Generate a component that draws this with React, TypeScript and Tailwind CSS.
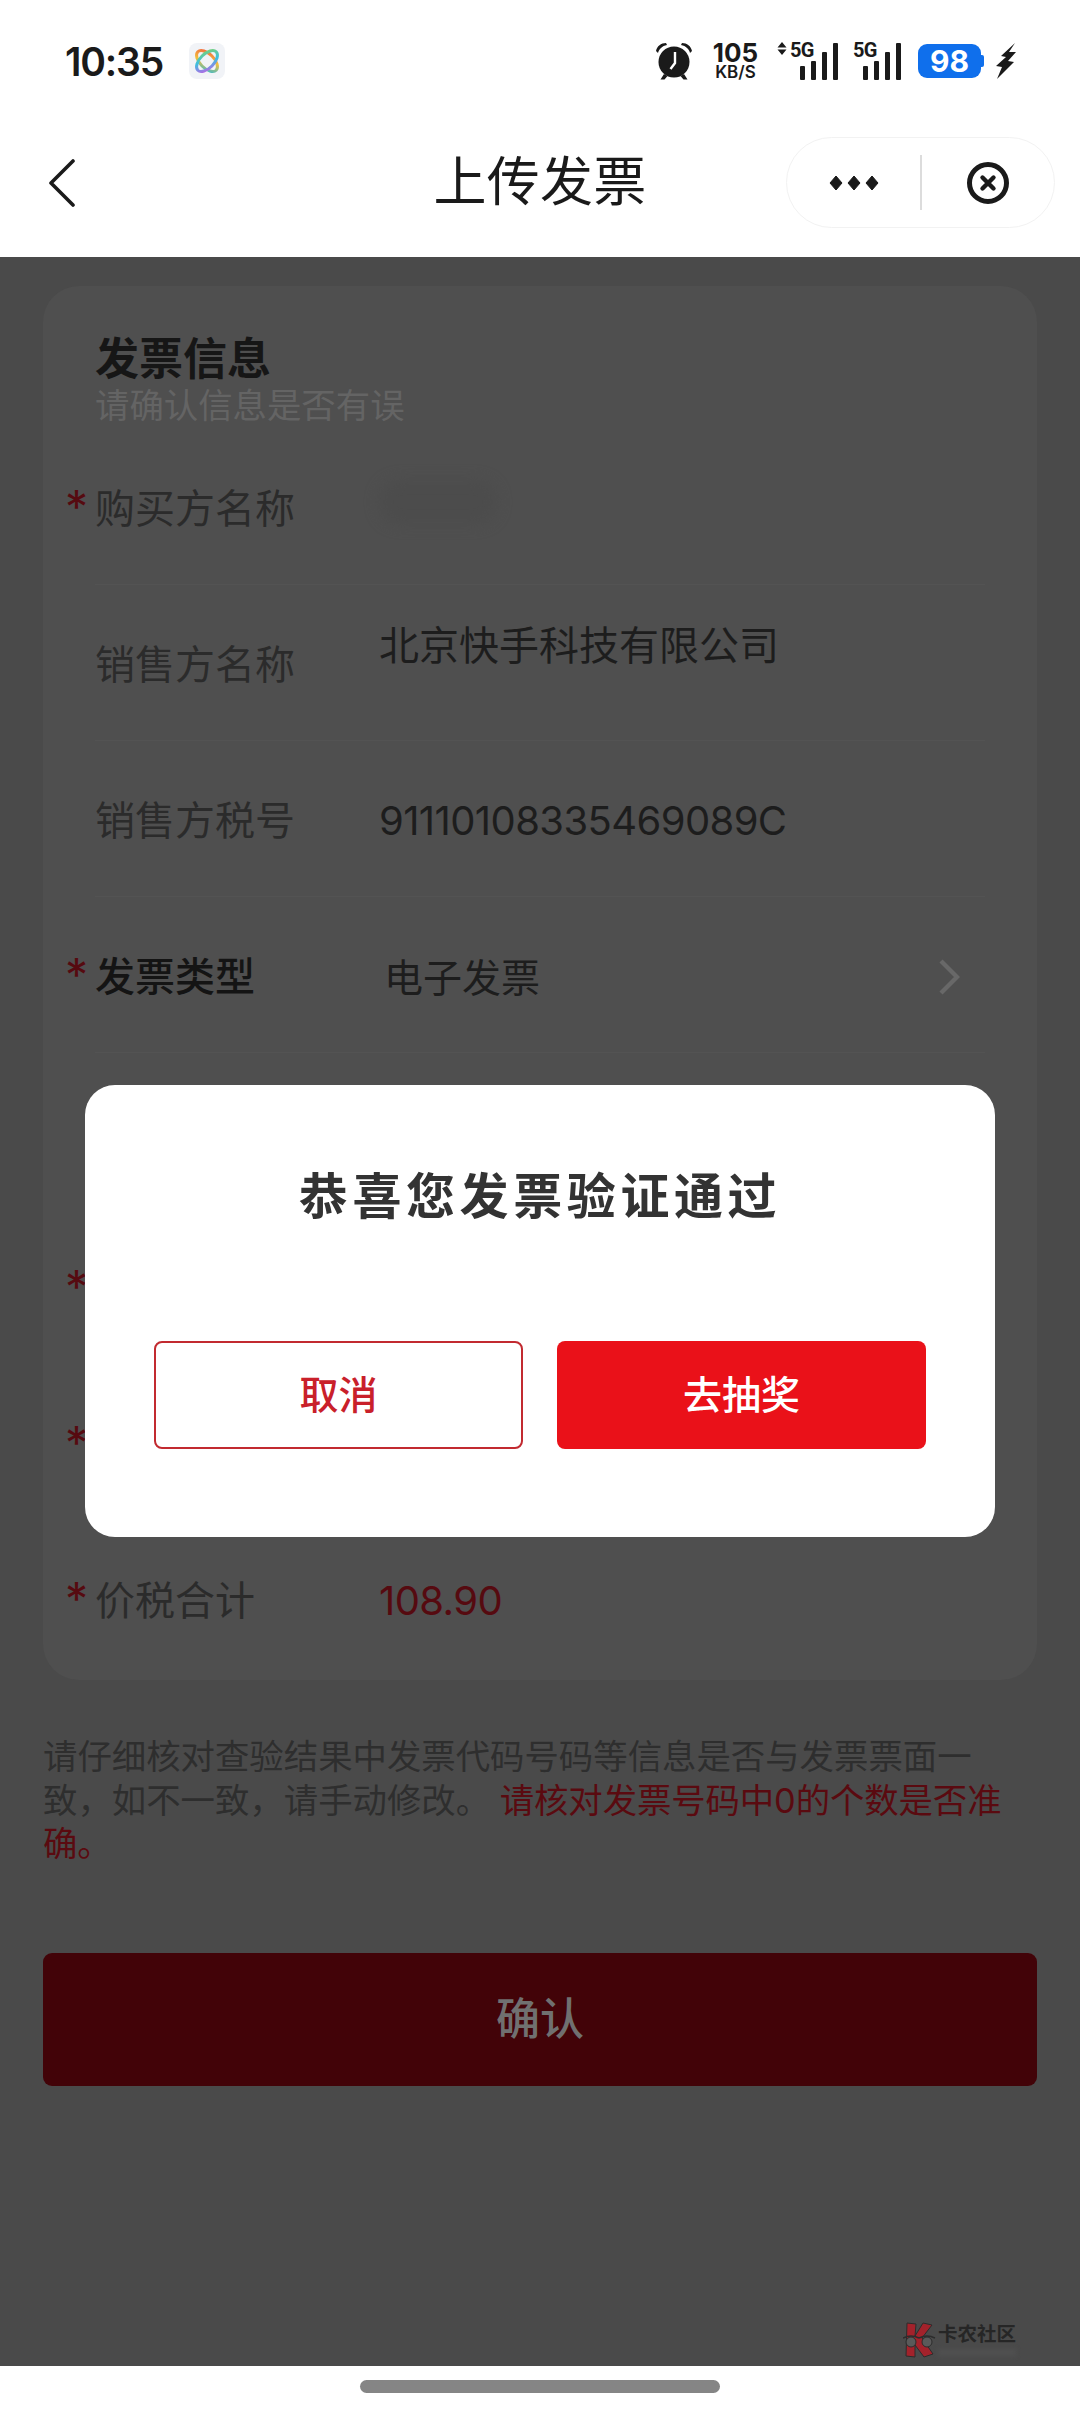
import React from 'react';

const rows = [
  { label: '购买方名称', required: true, value: null },
  { label: '销售方名称', value: '北京快手科技有限公司', raised: true },
  { label: '销售方税号', value: '91110108335469089C', digits: true },
  { label: '发票类型', required: true, value: '电子发票', select: true },
  { label: '发票代码' },
  { label: '发票号码', required: true },
  { label: '开票日期', required: true },
  { label: '价税合计', required: true, value: '108.90', red: true, digits: true, last: true },
];

const SignalBars = ({ arrows }: { arrows?: boolean }) => (
  <div className={arrows ? 'relative w-[62px] h-[38px]' : 'relative w-[49px] h-[38px]'}>
    <svg width={arrows ? 62 : 49} height="38" viewBox={arrows ? '0 0 62 38' : '0 0 49 38'} className="block">
      {arrows && <path d="M5 0 L9.5 5.5 H0.5 Z M5 13 L9.5 7.5 H0.5 Z" fill="#1a1a1a" />}
      <g fill="#1a1a1a" transform={arrows ? 'translate(13 0)' : 'translate(0 0)'}>
        <rect x="10" y="24" width="5" height="14" rx="1" />
        <rect x="21" y="19" width="5" height="19" rx="1" />
        <rect x="32" y="10" width="5" height="28" rx="1" />
        <rect x="43" y="1" width="5" height="37" rx="1" />
      </g>
    </svg>
    <span
      className={
        (arrows ? 'left-[13px] ' : 'left-0 ') +
        "absolute top-0 text-[20px] leading-[16px] font-bold tracking-[-0.8px] font-['Roboto',sans-serif]"
      }
    >
      5G
    </span>
  </div>
);

export default function App() {
  return (
    <div className="relative w-[1080px] h-[2412px] overflow-hidden flex flex-col bg-white font-['Inter','Noto_Sans_CJK_SC',sans-serif] text-[#1a1a1a]">
      {/* status bar */}
      <div className="h-[122px] shrink-0 flex items-center pl-[65px] pr-[64px]">
        <span className="mt-[1px] text-[39px] leading-none font-semibold tracking-[-1.2px]">10:35</span>
        <div className="ml-[26px] w-[36px] h-[36px] rounded-[8px] bg-[#f1f3f7] flex items-center justify-center">
          <svg width="28" height="28" viewBox="0 0 28 28" fill="none" strokeWidth="3">
            <defs>
              <linearGradient id="loopA" x1="0" y1="0" x2="1" y2="1">
                <stop offset="0" stopColor="#f2603f" />
                <stop offset="0.5" stopColor="#f3c03c" />
                <stop offset="1" stopColor="#2fb9d6" />
              </linearGradient>
              <linearGradient id="loopB" x1="1" y1="0" x2="0" y2="1">
                <stop offset="0" stopColor="#7ed36a" />
                <stop offset="0.5" stopColor="#3dbfe0" />
                <stop offset="1" stopColor="#c25de6" />
              </linearGradient>
            </defs>
            <ellipse cx="14" cy="14" rx="13" ry="7" transform="rotate(45 14 14)" stroke="url(#loopA)" />
            <ellipse cx="14" cy="14" rx="13" ry="7" transform="rotate(-45 14 14)" stroke="url(#loopB)" />
          </svg>
        </div>
        <div className="ml-auto flex items-center">
          <svg width="38" height="38" viewBox="0 0 38 38" fill="#1a1a1a">
            <path d="M1 9 C2 4 6 1 11 1 L12 3 C7 4 4 7 3 11 Z M37 9 C36 4 32 1 27 1 L26 3 C31 4 34 7 35 11 Z" />
            <circle cx="19" cy="20" r="15.5" />
            <path d="M9 32 L5.5 37.5 H9.5 L12.5 34 Z M29 32 L32.5 37.5 H28.5 L25.5 34 Z" />
            <path d="M20 10 V21 L15.5 27" stroke="#fff" strokeWidth="2.4" fill="none" />
          </svg>
          <div className="ml-[20px] w-[45px] flex flex-col items-center">
            <span className="text-[26px] leading-[22px] font-bold">105</span>
            <span className="text-[17px] leading-[16px] font-semibold">KB/S</span>
          </div>
          <div className="ml-[19px]"><SignalBars arrows /></div>
          <div className="ml-[14px]"><SignalBars /></div>
          <div className="ml-[16px] flex items-center">
            <div className="w-[63px] h-[34px] rounded-[9px] bg-[#0f6fec] flex items-center justify-center text-white text-[30px] leading-none font-bold">98</div>
            <div className="w-[3px] h-[12px] rounded-r-[2px] bg-[#0f6fec]" />
          </div>
          <svg className="ml-[12px]" width="20" height="36" viewBox="0 0 20 36" fill="#1a1a1a">
            <path d="M19 0 L5 13 L10 14 L0 23 L6 24 L1 36 L18 19 L12 18 L20 9 L13 9 Z" />
          </svg>
        </div>
      </div>

      {/* nav bar */}
      <div className="h-[135px] shrink-0 pb-[14px] grid grid-cols-[1fr_auto_1fr] items-center">
        <div className="pl-[48px]">
          <svg width="28" height="48" viewBox="0 0 28 48" fill="none" stroke="#1a1a1a" strokeWidth="3.6" strokeLinecap="round" strokeLinejoin="round" className="block">
            <path d="M25 2 L3 24 L25 46" />
          </svg>
        </div>
        <div className="text-[53px] leading-none tracking-[0.3px] text-[#1a1a1a]">上传发票</div>
        <div className="flex justify-end pr-[25px]">
          <div className="w-[269px] h-[91px] rounded-full border border-[#f2f2f2] flex items-center">
            <div className="w-[133px] flex justify-center">
              <svg width="50" height="16" viewBox="0 0 50 16" fill="#1a1a1a">
                <path d="M7 1 L13 8 L7 15 L1 8 Z M25 1 L31 8 L25 15 L19 8 Z M43 1 L49 8 L43 15 L37 8 Z" stroke="#1a1a1a" strokeWidth="1" strokeLinejoin="round" />
              </svg>
            </div>
            <div className="w-[2px] h-[55px] bg-[#dcdcdc]" />
            <div className="flex-1 flex justify-center">
              <svg width="44" height="44" viewBox="0 0 44 44" fill="none" stroke="#1a1a1a">
                <circle cx="22" cy="22" r="18.5" strokeWidth="5" />
                <path d="M16.5 16.5 L27.5 27.5 M27.5 16.5 L16.5 27.5" strokeWidth="4.4" strokeLinecap="round" />
              </svg>
            </div>
          </div>
        </div>
      </div>

      {/* page, already dimmed by the dialog mask */}
      <div className="relative flex-1 bg-[#4a4a4a] px-[43px] pt-[29px]">
        <div className="rounded-[36px] bg-[#4f4f4f] pl-[52px] pr-[52px]">
          <div className="pt-[46px]">
            <div className="text-[44px] leading-[54px] font-bold text-[#161616]">发票信息</div>
            <div className="text-[34.4px] leading-[39px] text-[#646464]">请确认信息是否有误</div>
          </div>
          <div className="mt-[4px]">
            {rows.map((row) => (
              <div
                key={row.label}
                className={row.last ? 'h-[159px] flex items-center' : 'h-[156px] pt-[5px] flex items-center border-b border-[#535353]'}
              >
                <div className="w-[284px] shrink-0 flex items-center text-[40px] leading-none">
                  {row.required && (
                    <span className="-ml-[30px] w-[30px] h-[40px] text-[46px] leading-[40px] text-[#560a10] -mt-[4px]">*</span>
                  )}
                  <span className={row.select ? 'text-[#141414] font-medium' : 'text-[#2b2b2b]'}>{row.label}</span>
                </div>
                {row.label === '购买方名称' && <div className="w-[118px] h-[44px] -mt-[14px] rounded-full bg-[#4c4c4c] blur-[7px]" />}
                {row.value && (
                  <div
                    className={
                      (row.raised ? 'mb-[38px] ' : '') +
                      (row.select ? 'ml-[5px] text-[39px] ' : 'text-[40px] ') +
                      (row.digits ? 'tracking-[-0.6px] ' : '') +
                      (row.red ? 'text-[#560a10] ' : 'text-[#1d1d1d] ') +
                      'leading-none'
                    }
                  >
                    {row.value}
                  </div>
                )}
                {row.select && (
                  <svg className="ml-auto mr-[25px]" width="22" height="36" viewBox="0 0 22 36" fill="none" stroke="#686868" strokeWidth="4.4">
                    <path d="M3 2 L19 18 L3 34" />
                  </svg>
                )}
              </div>
            ))}
          </div>
        </div>

        <p className="mt-[55px] w-[960px] text-[34.4px] leading-[43.5px] text-[#2e2e2e]">
          请仔细核对查验结果中发票代码号码等信息是否与发票票面一致，如不一致，请手动修改。{' '}
          <span className="text-[#5a0a10] tracking-[-0.1px]">请核对发票号码中0的个数是否准确。</span>
        </p>

        <div className="mt-[87px] h-[133px] rounded-[9px] bg-[#420308] flex items-center justify-center text-[44px] font-medium text-[#707070]">
          确认
        </div>

        {/* forum watermark */}
        <div className="absolute left-[903px] top-[2065px] flex items-start">
          <svg width="34" height="36" viewBox="0 0 34 36" className="block">
            <path d="M4 1 L13 2 L12 14 L20 1 L29 3 L19 16 L30 32 L21 35 L12 23 L12 35 L3 34 Z" fill="#a3222b" stroke="#2c2c2c" strokeWidth="1" />
            <path d="M0 16 Q8 12 16 16 M16 16 Q24 12 32 16" fill="none" stroke="#2c2c2c" strokeWidth="1.5" />
            <circle cx="8" cy="20" r="5" fill="#5a5a5a" stroke="#2c2c2c" />
            <circle cx="24" cy="20" r="5" fill="#5a5a5a" stroke="#2c2c2c" />
          </svg>
          <div className="ml-[1px] mt-[1px] flex flex-col">
            <span className="text-[19.5px] leading-[22px] font-bold text-[#262626] whitespace-nowrap">卡农社区</span>
            <div className="mt-[4px] h-[7px] bg-[#505050] blur-[2px]" />
          </div>
        </div>
      </div>

      {/* home indicator */}
      <div className="h-[46px] shrink-0 bg-white flex justify-center pt-[14px]">
        <div className="w-[360px] h-[13px] rounded-full bg-[#858585]" />
      </div>

      {/* dialog */}
      <div className="absolute inset-x-0 top-[1085px] flex justify-center">
        <div className="w-[910px] h-[452px] rounded-[30px] bg-white flex flex-col items-center">
          <div className="mt-[82px] text-[49px] leading-[60px] tracking-[4.6px] font-bold text-[#333333]">恭喜您发票验证通过</div>
          <div className="mt-[114px] flex gap-[34px]">
            <div className="w-[369px] h-[108px] rounded-[8px] border-2 border-[#c22a30] flex items-center justify-center text-[39px] font-medium text-[#c9202a]">取消</div>
            <div className="w-[369px] h-[108px] rounded-[8px] bg-[#ea1119] flex items-center justify-center text-[39px] font-medium text-white">去抽奖</div>
          </div>
        </div>
      </div>
    </div>
  );
}
